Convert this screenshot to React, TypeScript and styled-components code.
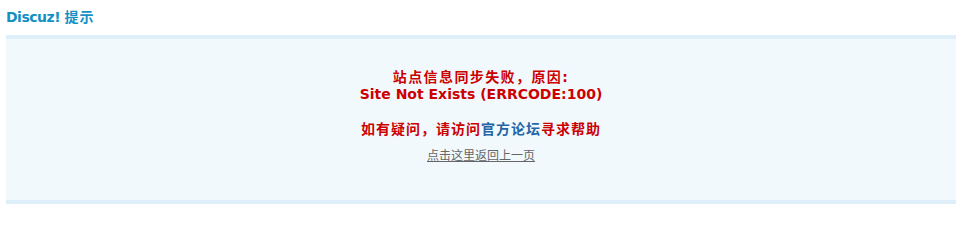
import React from "react";
import styled, { createGlobalStyle } from "styled-components";

const Global = createGlobalStyle`
  html, body { margin: 0; padding: 0; background: #fff; }
  body {
    font: 12px "DejaVu Sans", Verdana, "Noto Sans CJK SC", sans-serif;
    color: #333;
  }
`;

const Container = styled.div`
  padding: 9px 10px 0 6px;
`;

const Title = styled.h3`
  margin: 0 0 9px;
  font-size: 14px;
  line-height: 17px;
  font-weight: 700;
  color: #1590c3;
  letter-spacing: -0.5px;
`;

const Cjk = styled.span`
  letter-spacing: 1px;
`;

const InfoBox = styled.div`
  border-top: 4px solid #deeffa;
  border-bottom: 4px solid #deeffa;
  background: #f2f9fd;
  padding: 30px 30px 30px;
  text-align: center;
`;

const InfoTitle = styled.h4`
  margin: 0 0 17px;
  font-size: 14px;
  line-height: 17px;
  font-weight: 700;
  color: #c00;
`;

const Line = styled.span<{ $spaced?: boolean }>`
  display: block;
  letter-spacing: ${(p) => (p.$spaced ? "1.4px" : "0")};
`;

const Help = styled.p`
  margin: 0 0 10px;
  font-size: 14px;
  line-height: 18px;
  font-weight: 700;
  color: #c00;
  letter-spacing: 1px;
`;

const Official = styled.a`
  color: #2366a8;
  text-decoration: none;
`;

const Back = styled.p`
  margin: 0 0 6px;
  font-size: 12px;
  line-height: 16px;
`;

const BackLink = styled.a`
  color: #666;
  text-decoration: underline;
`;

export default function App() {
  return (
    <>
      <Global />
      <Container>
        <Title>
          Discuz! <Cjk>提示</Cjk>
        </Title>
        <InfoBox>
          <InfoTitle>
            <Line $spaced>站点信息同步失败，原因:</Line>
            <Line>Site Not Exists (ERRCODE:100)</Line>
          </InfoTitle>
          <Help>
            如有疑问，请访问<Official href="#">官方论坛</Official>寻求帮助
          </Help>
          <Back>
            <BackLink href="#">点击这里返回上一页</BackLink>
          </Back>
        </InfoBox>
      </Container>
    </>
  );
}
